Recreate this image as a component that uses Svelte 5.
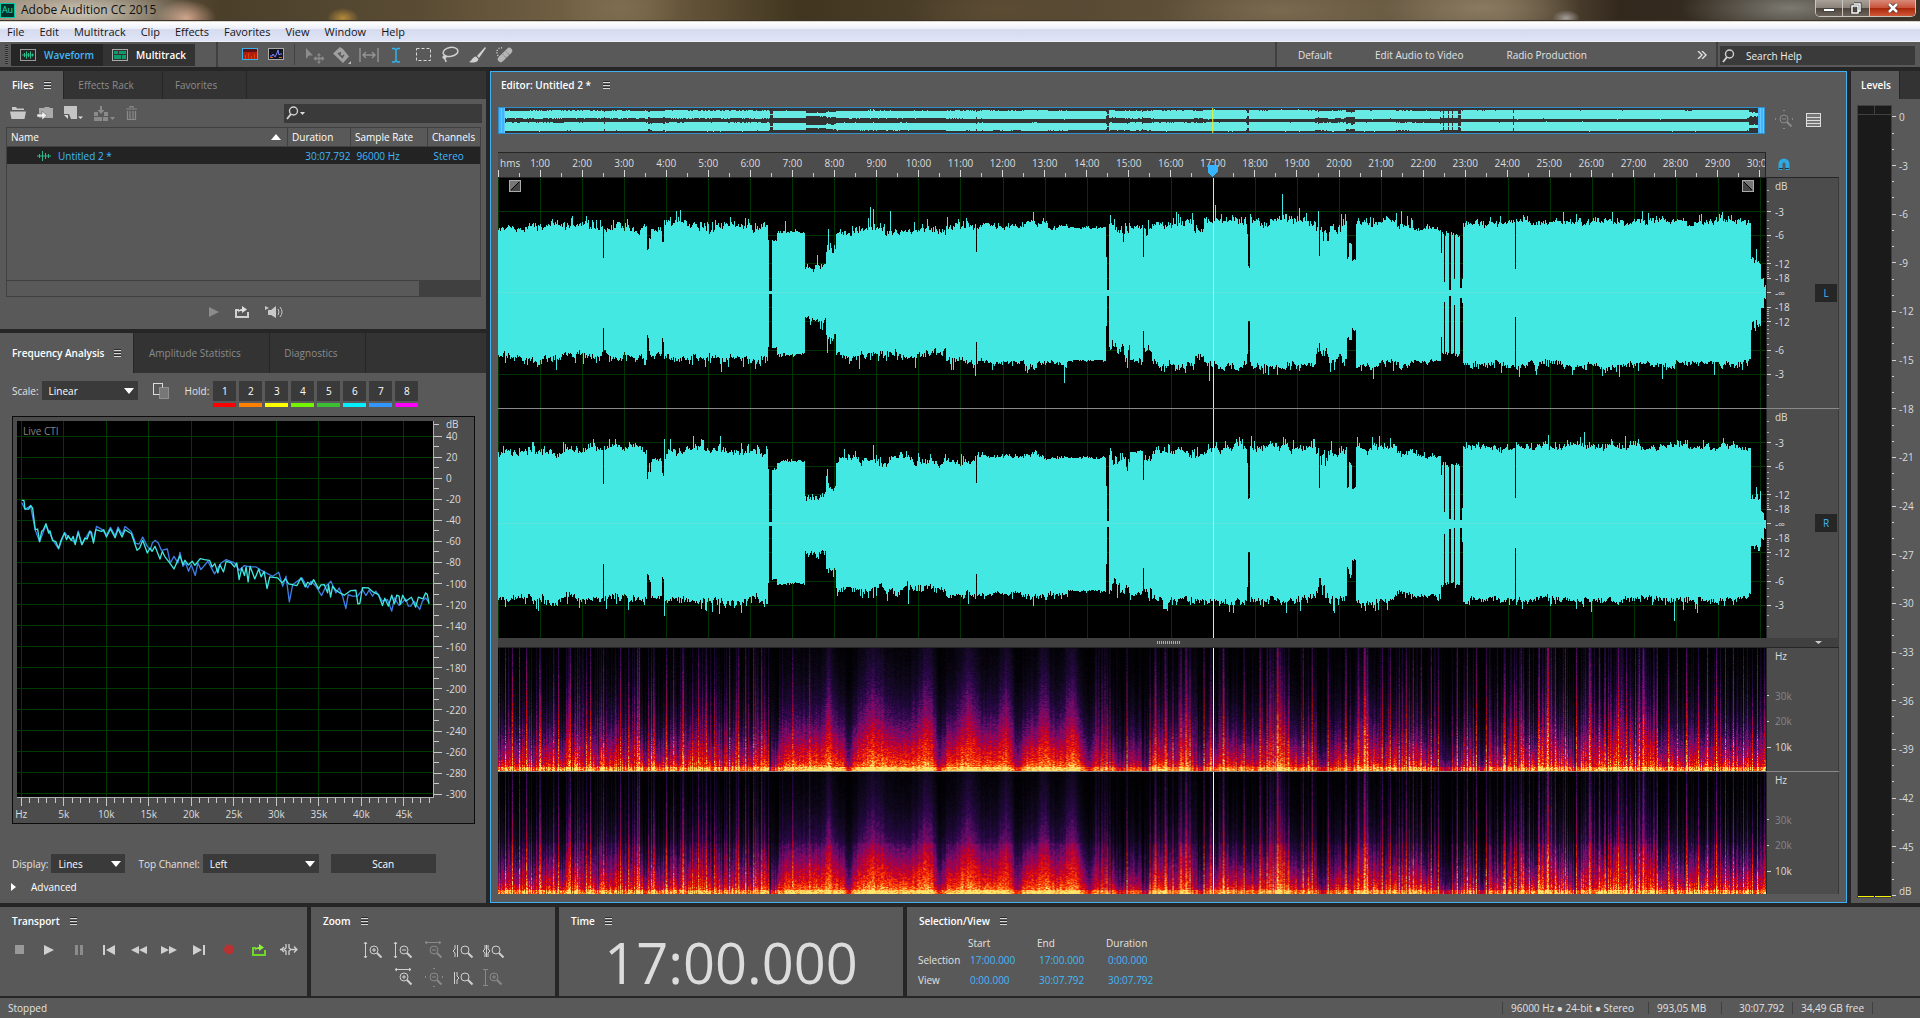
<script>
  import { onMount } from 'svelte';

  const menus = ['File', 'Edit', 'Multitrack', 'Clip', 'Effects', 'Favorites', 'View', 'Window', 'Help'];

  const holds = ['#ff0000', '#ff8000', '#ffff00', '#73f500', '#3dbf33', '#00f0ff', '#3396ff', '#ff00ff'];

  const minutes = Array.from({ length: 31 }, (_, i) => i);
  const total = 30 + 7.792 / 60;
  const playhead = (17 / total) * 100;
  const minuteX = (m) => (m / total) * 100;

  // dB scale of a waveform lane, 0 dB touches the lane edge
  const dbY = (db, dir) => 50 + dir * 50 * Math.pow(10, -db / 20);
  const dbLines = [3, 6, 12, 18];
  const dbMinor = [1, 2, 4, 5, 7, 8, 9, 10, 11, 13, 14, 15, 16, 17];

  const freqDb = Array.from({ length: 18 }, (_, i) => 40 - i * 20);
  const freqY = (db) => 4 + ((40 - db) / 340) * 95;
  const freqX = (k) => 1 + k * 2.045;
  const levels = Array.from({ length: 49 }, (_, i) => i);

  const WIDTH = 1267;

  // pseudo random numbers that stay the same on every load
  function makeRandom(seed) {
    let s = seed;
    return () => {
      s = (s * 1664525 + 1013904223) % 4294967296;
      return s / 4294967296;
    };
  }

  // start column, L up, L down, R up, R down, noise
  const segments = [
    [0, 65, 64, 72, 75, 4],
    [105, 35, 35, 40, 40, 0],
    [106, 64, 64, 73, 75, 4],
    [149, 43, 43, 48, 50, 2],
    [151, 53, 53, 56, 58, 3],
    [153, 62, 62, 66, 72, 2],
    [164, 48, 46, 52, 53, 3],
    [166, 65, 65, 72, 75, 4],
    [270, 52, 52, 54, 55, 2],
    [271, 2, 1, 2, 2, 0],
    [274, 52, 54, 54, 54, 1],
    [279, 60, 61, 61, 60, 1],
    [307, 26, 26, 26, 28, 4],
    [328, 44, 46, 42, 44, 6],
    [338, 62, 62, 63, 65, 4],
    [448, 66, 70, 66, 70, 4],
    [478, 41, 49, 41, 50, 0],
    [479, 66, 69, 66, 70, 2],
    [524, 69, 71, 67, 72, 3],
    [550, 65, 69, 65, 69, 2],
    [570, 64, 68, 65, 67, 1],
    [608, 36, 33, 38, 40, 0],
    [609, 3, 3, 3, 3, 0],
    [611, 56, 56, 68, 60, 8],
    [632, 65, 69, 72, 70, 2],
    [644, 36, 38, 44, 44, 0],
    [645, 58, 58, 60, 66, 5],
    [653, 68, 71, 72, 74, 4],
    [695, 58, 62, 68, 72, 3],
    [705, 70, 73, 75, 76, 4],
    [748, 56, 60, 60, 62, 2],
    [749, 25, 28, 25, 28, 1],
    [751, 70, 73, 76, 77, 4],
    [817, 60, 62, 66, 66, 5],
    [820, 37, 50, 36, 54, 0],
    [821, 56, 60, 60, 60, 8],
    [830, 65, 68, 72, 71, 5],
    [848, 34, 44, 34, 44, 2],
    [850, 50, 48, 58, 50, 2],
    [853, 34, 36, 36, 36, 2],
    [857, 70, 73, 76, 77, 4],
    [898, 66, 70, 72, 72, 3],
    [915, 62, 68, 68, 71, 2],
    [942, 40, 44, 50, 60, 2],
    [943, 58, 60, 60, 62, 2],
    [945, 11, 9, 12, 10, 0],
    [946, 57, 60, 60, 60, 2],
    [950, 3, 3, 5, 5, 0],
    [952, 57, 60, 60, 60, 2],
    [955, 14, 12, 4, 4, 0],
    [956, 57, 60, 58, 61, 2],
    [961, 5, 5, 4, 4, 0],
    [963, 14, 10, 16, 18, 0],
    [964, 69, 71, 75, 76, 3],
    [1016, 24, 24, 26, 24, 0],
    [1017, 70, 71, 76, 75, 3],
    [1252, 34, 33, 26, 26, 4],
    [1262, 15, 15, 12, 14, 1],
    [1265, 6, 6, 4, 4, 1]
  ];

  // single peaks standing out of the envelope, per side
  const peaks = [
    { 287: 71, 319: 38, 372: 85, 375: 83, 392: 81, 535: 80, 677: 80, 679: 78, 783: 98, 819: 81, 902: 81, 1064: 80, 1149: 79, 1257: 44 },
    { 361: 76, 417: 75, 477: 83, 566: 90, 710: 88, 1037: 82, 1120: 84, 1163: 86, 1215: 82 },
    { 166: 84, 375: 78, 784: 86, 858: 86, 891: 85, 1049: 88, 1085: 91, 1126: 87, 1257: 37 },
    { 166: 92, 130: 86, 410: 80, 470: 80, 876: 87, 1092: 88, 1175: 96, 1198: 89 }
  ];

  function envelope(side, seed) {
    const random = makeRandom(seed);
    const out = [];
    let k = 0;
    let drift = 0;
    for (let x = 0; x < WIDTH; x++) {
      while (k + 1 < segments.length && x >= segments[k + 1][0]) k++;
      const noise = segments[k][5];
      drift = drift * 0.8 + (random() - 0.5) * 0.9;
      let v = segments[k][side + 1] + (random() - 0.5 + drift) * noise * 1.4;
      if (random() > 0.82) v += random() * noise * 2.4;
      out.push(Math.round(Math.max(v, peaks[side][x] ?? 0, 1)));
    }
    return out;
  }

  function outline(up, down, mid, scale) {
    let d = `M0 ${mid}`;
    up.forEach((v, x) => (d += `V${mid - v * scale}H${x + 1}`));
    for (let x = down.length - 1; x >= 0; x--) d += `V${mid + down[x] * scale}H${x}`;
    return d + 'Z';
  }

  const sides = [envelope(0, 11), envelope(1, 23), envelope(2, 37), envelope(3, 51)];
  const lanes = [
    { name: 'L', path: outline(sides[0], sides[1], 114, 1) },
    { name: 'R', path: outline(sides[2], sides[3], 114, 1) }
  ];
  const overview = [outline(sides[0], sides[1], 7, 0.065), outline(sides[2], sides[3], 20, 0.062)];

  const lineTop =
    '65,512 72,512 75,538 86,538 92,527 98,535 106,600 113,598 119,636 125,605 130,601 138,582 146,610 150,603 158,633 167,635 176,656 184,630 194,610 200,630 205,618 214,632 220,620 226,645 235,608 246,645 255,625 262,628 270,605 275,608 281,640 288,600 305,605 312,600 320,622 332,598 346,624 355,598 367,622 376,600 395,612 412,662 420,655 429,632 443,670 451,655 457,665 466,650 481,688 488,665 495,680 510,700 523,718 541,678 550,705 556,692 566,706 578,695 586,707 602,687 615,690 630,692 638,712 646,702 655,730 661,705 672,727 680,695 695,700 705,712 712,700 719,750 727,715 735,738 740,712 746,757 752,710 766,748 778,718 785,742 794,725 803,777 811,742 835,745 848,760 858,748 868,763 893,768 905,745 918,772 925,758 935,765 943,750 958,778 965,766 975,765 985,790 988,765 994,803 1000,770 1010,782 1022,790 1035,797 1055,783 1070,782 1076,823 1082,822 1090,774 1108,775 1120,786 1138,795 1150,828 1157,806 1168,830 1178,797 1186,823 1193,797 1200,800 1203,825 1211,797 1220,815 1237,803 1250,833 1258,803 1272,808 1280,790 1285,795 1290,823';
  const lineBottom =
    '65,518 75,538 92,529 106,602 119,636 138,586 160,633 176,658 194,608 205,622 226,640 235,604 246,645 270,603 281,636 290,590 305,598 320,616 332,593 346,618 355,592 367,614 376,590 395,606 408,641 418,643 429,622 443,650 452,660 458,640 466,632 476,640 485,662 503,658 512,700 523,680 535,700 541,668 550,710 558,700 567,725 575,705 587,738 595,700 604,720 625,695 645,733 665,700 680,690 705,700 719,722 735,708 752,712 770,712 785,722 800,730 820,740 838,728 850,770 860,740 870,817 880,765 908,745 925,775 935,755 950,770 967,798 980,770 995,755 1010,790 1020,775 1030,800 1040,837 1047,795 1060,800 1075,800 1090,780 1100,798 1110,782 1120,800 1130,785 1150,815 1165,810 1178,845 1186,805 1200,828 1210,818 1220,808 1228,830 1235,830 1245,815 1262,840 1270,815 1280,805 1290,820';

  // columns where a transient reaches the high frequencies
  const hits = [
    7, 14, 21, 28, 41, 42, 55, 60, 72, 79, 92, 105, 122, 139, 141, 155, 168, 175, 184, 185, 200, 208, 216, 231, 240, 247, 255, 263, 294, 311,
    628, 656, 657, 666, 687, 705, 724, 725, 745, 761, 768, 778, 779, 804, 813, 829, 847, 865, 866, 883, 891, 900, 907, 914, 922, 932, 939, 958,
    968, 977, 987, 1005, 1006, 1015, 1022, 1030, 1040, 1048, 1049, 1056, 1066, 1077, 1090, 1100, 1106, 1119, 1127, 1136, 1144, 1158, 1169, 1178,
    1187, 1199, 1208, 1217, 1226, 1234, 1244, 1258
  ];
  const humps = [[330, 4], [375, 12], [428, 9], [470, 9], [508, 7], [545, 5], [573, 7], [1049, 6], [688, 8], [778, 8], [866, 9], [1090, 6], [1120, 7], [1144, 6]];
  const dips = [[273, 4], [350, 5], [441, 5], [518, 6], [590, 8], [622, 8], [646, 5], [700, 6], [824, 7], [949, 15], [982, 8], [1075, 3]];

  const heat = [
    [0, 0, 0, 0], [0.12, 14, 8, 26], [0.28, 42, 8, 74], [0.42, 112, 14, 112], [0.55, 168, 0, 74],
    [0.66, 218, 0, 12], [0.8, 255, 60, 0], [0.92, 255, 150, 40], [1, 255, 232, 110]
  ];

  function heatColor(v) {
    const t = Math.min(Math.max(v, 0), 0.999);
    let i = 1;
    while (heat[i][0] < t) i++;
    const a = heat[i - 1];
    const b = heat[i];
    const p = (t - a[0]) / (b[0] - a[0]);
    return [1, 2, 3].map((c) => a[c] + (b[c] - a[c]) * p);
  }

  function drawSpectrum(canvas, channel) {
    const ctx = canvas.getContext('2d');
    const { width, height } = canvas;
    const image = ctx.createImageData(width, height);
    const random = makeRandom(90);
    const grain = makeRandom(400 + channel);
    for (let x = 0; x < width; x++) {
      const smooth = x > 285 && x < 600;
      let reach = smooth ? 0.4 + random() * 0.1 : 0.24 + random() * 0.24;
      let gain = smooth ? 0.74 + random() * 0.13 : 0.5 + random() * 0.36;
      if (!smooth && random() > 0.82) {
        reach += 0.28;
        gain += 0.1;
      }
      if (hits.includes(x)) {
        reach = 0.72 + random() * 0.3;
        gain = 0.9;
      }
      if (x > 596 && x < 608 && x % 3 === 0) reach = 0.85;
      for (const [c, w] of humps) {
        const k = Math.exp(-Math.pow((x - c) / w, 2));
        reach += 0.24 * k;
        gain += 0.06 * k;
      }
      for (const [c, w] of dips) {
        const k = Math.exp(-Math.pow((x - c) / w, 2));
        if (!hits.includes(x)) {
          gain -= 0.28 * k;
          reach -= 0.1 * k;
        }
      }
      for (let y = 0; y < height; y++) {
        const f = 1 - y / height;
        let v = gain * Math.exp(-Math.pow(f / reach, 1.35));
        v += (grain() - 0.5) * (0.05 + v * 0.3);
        if (f < 0.1) v += 0.1 * (1 - f / 0.1);
        if (f < 0.04) v += 0.15;
        if (channel && f > 0.42) v *= 0.88;
        const [r, g, b] = heatColor(v);
        const i = (y * width + x) * 4;
        image.data[i] = r;
        image.data[i + 1] = g;
        image.data[i + 2] = b;
        image.data[i + 3] = 255;
      }
    }
    ctx.putImageData(image, 0, 0);
  }

  let spectra = [];

  onMount(() => {
    spectra.forEach((canvas, i) => drawSpectrum(canvas, i));
  });
</script>

{#snippet burger()}
  <svg class="burger" width="7" height="9" viewBox="0 0 7 9" aria-hidden="true">
    <path d="M0 1.5h7M0 4.5h7M0 7.5h7" stroke="#d8d8d8" />
    <path d="M0 .5h7M0 3.5h7M0 6.5h7" stroke="#2c2c2c" />
  </svg>
{/snippet}

{#snippet lens(sign, extra, dim, x)}
  <svg width="22" height="20" viewBox="0 0 22 20" fill="none" stroke={dim ? '#8a8a8a' : '#cfcfcf'} aria-hidden="true">
    <circle cx={x} cy="9" r="4" />
    <path d="M{x + 3} 12l4.500 4.500" stroke-width="2" />
    {#if sign !== 'none'}<path d="M{x - 2} 9h4" />{/if}
    {#if sign === 'plus'}<path d="M{x} 7v4" />{/if}
    <path d={extra} />
  </svg>
{/snippet}

{#snippet picker(id, label, value, width)}
  <label for={id}>{label}</label>
  <span class="picker {width}">
    <select {id}><option>{value}</option></select>
    <svg width="10" height="6" viewBox="0 0 10 6" aria-hidden="true"><path d="M0 0h10L5 6z" fill="#fff" /></svg>
  </span>
{/snippet}

{#snippet lensOnly()}
  <svg width="14" height="16" viewBox="0 0 14 16" fill="none" stroke="#d0d0d0" aria-hidden="true">
    <circle cx="7.500" cy="6" r="4" stroke-width="1.400" />
    <path d="M5 9L1 14" stroke-width="2" />
  </svg>
{/snippet}

<div class="app">
  <header class="titlebar">
    <span class="logo">Au</span>
    <h1>Adobe Audition CC 2015</h1>
    <div class="window-buttons">
      <button aria-label="Minimize"><svg width="12" height="10" viewBox="0 0 12 10"><rect x=".5" y="5.500" width="11" height="3" fill="#fff" stroke="#444" /></svg></button>
      <button aria-label="Restore">
        <svg width="12" height="12" viewBox="0 0 12 12" fill="none"><path d="M4 2h6v7h-2M2 4h6v7H2z" stroke="#333" stroke-width="3" /><path d="M4 2h6v7h-2M2 4h6v7H2z" stroke="#fff" stroke-width="1.500" /></svg>
      </button>
      <button class="close" aria-label="Close">
        <svg width="12" height="10" viewBox="0 0 12 10"><path d="M2 1l8 8M10 1l-8 8" stroke="#432" stroke-width="4" /><path d="M2 1l8 8M10 1l-8 8" stroke="#fff" stroke-width="2.500" /></svg>
      </button>
    </div>
  </header>

  <nav class="menubar">
    {#each menus as menu}<button>{menu}</button>{/each}
  </nav>

  <div class="toolbar">
    <span class="grip"></span>
    <button class="mode active">
      <svg width="16" height="12" viewBox="0 0 16 12" fill="none"><rect x=".5" y=".5" width="15" height="11" stroke="#9a9a9a" /><path d="M2 6h12M4.500 4v4M6.500 2.500v7M8.500 4v4M10.500 2.500v7M12.500 4.500v3" stroke="#2fb888" /></svg>
      Waveform
    </button>
    <button class="mode">
      <svg width="16" height="12" viewBox="0 0 16 12" fill="none"><rect x=".5" y=".5" width="15" height="11" fill="#333" stroke="#aaa" /><path d="M2 2h4v3H2zM7 2h7v3H7zM2 6h7v4H2zM10 6h4v4h-4z" fill="#0e9a6c" /></svg>
      Multitrack
    </button>
    <div class="views">
      <button aria-label="Spectral frequency display">
        <svg width="16" height="12" viewBox="0 0 16 12"><rect x=".5" y=".5" width="15" height="11" fill="#b02008" stroke="#35b4f0" /><path d="M1 1h14v3H1z" fill="#5c1018" /><path d="M3.500 11V7M6.500 11V5M9.500 11V8M12.500 11V6" stroke="#d84010" /></svg>
      </button>
      <button aria-label="Spectral pitch display">
        <svg width="16" height="12" viewBox="0 0 16 12" fill="none"><rect x=".5" y=".5" width="15" height="11" fill="#151520" stroke="#aaa" /><path d="M2 8h2l1-2 2 3 2-4 1-3 1 5 1-1h2" stroke="#7c86ff" /><path d="M2 9.500h3M11 9.500h3" stroke="#c66a20" /></svg>
      </button>
    </div>
    <div class="tools">
      <button aria-label="Move">
        <svg width="20" height="20" viewBox="0 0 20 20" fill="#8c8c8c"><path d="M1 3v11l3-3.500h4z" /><path d="M14 8l2 2.500h-1.500v2H17V11l2.500 2.500L17 16v-1.500h-2.500v2H16L14 19l-2-2.500h1.500v-2H11V16l-2.500-2.500L11 11v1.500h2.500v-2H12z" /></svg>
      </button>
      <button aria-label="Razor">
        <svg width="20" height="20" viewBox="0 0 20 20"><path d="M1 8.500L8 2l3 2 6 7.500L11 18z" fill="#a0a0a0" /><path d="M6 8l5 5M8.500 7l-1 3M12 10l-2 2" stroke="#595959" stroke-width="1.500" /><path d="M19 16v3h-3z" fill="#bbb" /></svg>
      </button>
      <button aria-label="Slip">
        <svg width="20" height="20" viewBox="0 0 20 20" fill="none" stroke="#949494" stroke-width="1.400"><path d="M1 3v14M19 3v14M4 10h12M7 7l-3 3 3 3M13 7l3 3-3 3" /></svg>
      </button>
      <button aria-label="Time selection">
        <svg width="20" height="20" viewBox="0 0 20 20" fill="none" stroke="#2fb4ee" stroke-width="1.500"><path d="M6 3.500h2.500L10 5l1.500-1.500H14M6 17h2.500l1.500-1.500 1.500 1.500H14M10 5v11" /></svg>
      </button>
      <button aria-label="Marquee selection">
        <svg width="20" height="20" viewBox="0 0 20 20" fill="none" stroke="#d8d8d8"><rect x="3.500" y="3.500" width="14" height="12" stroke-dasharray="3 2" /></svg>
      </button>
      <button aria-label="Lasso selection">
        <svg width="20" height="20" viewBox="0 0 20 20" fill="none" stroke="#d0d0d0" stroke-width="1.500"><ellipse cx="10.500" cy="7" rx="7.500" ry="4.500" transform="rotate(-10 10 7)" /><path d="M5 11c-3 0-2 3 0 2s1-3-1-1c0 2 2 2 2 5" /></svg>
      </button>
      <button aria-label="Paintbrush selection">
        <svg width="20" height="20" viewBox="0 0 20 20" fill="#d0d0d0"><path d="M18 2l1 1-7 10-2-2zM9 11.500l2.500 2.500c-1 4-5 4-9.500 3 3-1 3-5 7-5.500z" /></svg>
      </button>
      <button aria-label="Spot healing brush">
        <svg width="20" height="20" viewBox="0 0 20 20"><path d="M8 3a4 4 0 0 0-5 4 5 5 0 0 0 3 5" fill="none" stroke="#ccc" stroke-dasharray="1 1.500" stroke-width="1.500" /><rect x="2" y="7" width="18" height="6" rx="3" fill="#b5b5b5" transform="rotate(-45 11 10)" /><path d="M9 9.500l4 4M12 6.500l4 4" stroke="#666" stroke-dasharray="1 1" /></svg>
      </button>
    </div>
    <div class="workspaces">
      <button>Default</button>
      <button>Edit Audio to Video</button>
      <button>Radio Production</button>
      <button class="more" aria-label="More workspaces">
        <svg width="10" height="8" viewBox="0 0 10 8" fill="none" stroke="#e0e0e0" stroke-width="1.400"><path d="M1 0l4 4-4 4M5 0l4 4-4 4" /></svg>
      </button>
    </div>
    <div class="help">
      <label class="search">
        {@render lensOnly()}
        <input type="text" placeholder="Search Help" aria-label="Search Help" />
      </label>
    </div>
  </div>

  <main>
    <div class="side">
      <section class="panel files">
        <div class="tabs low">
          <button class="tab on">Files {@render burger()}</button>
          <button class="tab rack">Effects Rack</button>
          <button class="tab favs">Favorites</button>
        </div>
        <div class="file-tools">
          <button aria-label="Open file"><svg width="16" height="14" viewBox="0 0 16 14"><path d="M2 1h4l1 1.500h7V4H2zM0 5.500h16L14.500 13h-13z" fill="#c8c8c8" /></svg></button>
          <button aria-label="Import file"><svg width="16" height="14" viewBox="0 0 16 14"><path d="M2 2h5l1-1h4l1 1h3v10H2z" fill="#aaa" /><path d="M0 8h5V5l5 4.500L5 14v-3H0z" fill="#eee" stroke="#555" stroke-width=".5" /></svg></button>
          <button aria-label="New file"><svg width="19" height="14" viewBox="0 0 19 14"><path d="M0 0h13v13H7L5 8H0z" fill="#c4c4c4" /><path d="M0 9h4v4z" fill="#d8d8d8" /><path d="M14 10.500h5L16.500 13z" fill="#ddd" /></svg></button>
          <button aria-label="Insert into multitrack"><svg width="21" height="15" viewBox="0 0 21 15"><path d="M0 6h4v4H0zM10 6h4v4h-4zM0 11h8v4H0zM9 11h5v4H9zM6 0h2v4h2.500L7 8 3.500 4H6z" fill="#8a8a8a" /><path d="M16 11h5l-2.500 3z" fill="#8a8a8a" /></svg></button>
          <button aria-label="Delete"><svg width="11" height="14" viewBox="0 0 11 14" fill="none" stroke="#8a8a8a"><path d="M0 3h11M4 2V.5h3V2M1.500 5v8.500h8V5M4 5v8M7 5v8" stroke-width="1.200" /></svg></button>
          <label class="search narrow">
            {@render lensOnly()}
            <svg width="5" height="3" viewBox="0 0 5 3" aria-hidden="true"><path d="M0 0h5L2.500 3z" fill="#ddd" /></svg>
            <input type="text" aria-label="Search files" />
          </label>
        </div>
        <div class="file-list">
          <table>
            <thead>
              <tr>
                <th>
                  <span class="sorted">Name <svg width="10" height="6" viewBox="0 0 10 6" aria-hidden="true"><path d="M0 6h10L5 0z" fill="#fff" /></svg></span>
                </th>
                <th class="duration">Duration</th>
                <th class="rate">Sample Rate</th>
                <th class="channels">Channels</th>
              </tr>
            </thead>
            <tbody>
              <tr>
                <td>
                  <span class="file">
                    <svg width="14" height="12" viewBox="0 0 14 12" stroke="#2fb888" aria-hidden="true"><path d="M0 6h14M2.500 4v4M5.500 1v10M8.500 3v6M11.500 4v4" /></svg>
                    Untitled 2 *
                  </span>
                </td>
                <td class="num">30:07.792</td>
                <td>96000 Hz</td>
                <td class="stereo">Stereo</td>
              </tr>
            </tbody>
          </table>
          <div class="scroll"><span></span></div>
        </div>
        <div class="preview">
          <button aria-label="Play"><svg width="10" height="10" viewBox="0 0 10 10"><path d="M0 0l10 5-10 5z" fill="#8c8c8c" /></svg></button>
          <button aria-label="Loop"><svg width="14" height="12" viewBox="0 0 14 12"><path d="M4 4H1v7h12V6" fill="none" stroke="#d0d0d0" stroke-width="2" /><path d="M3 7c0-3 2-4 4-4V0l5 3.500L7 7V5C5 5 4 5 3 7z" fill="#e0e0e0" /></svg></button>
          <button aria-label="Auto-play"><svg width="18" height="14" viewBox="0 0 18 14"><path d="M0 1l4 2-4 2zM3 5h3l5-4v12L6 10H3z" fill="#c8c8c8" /><path d="M13 4q2 3 0 6M15 2q4 5 0 10" fill="none" stroke="#c8c8c8" /></svg></button>
        </div>
      </section>

      <section class="panel analysis">
        <div class="tabs">
          <button class="tab on">Frequency Analysis {@render burger()}</button>
          <button class="tab amp">Amplitude Statistics</button>
          <button class="tab diag">Diagnostics</button>
        </div>
        <div class="controls">
          {@render picker('scale', 'Scale:', 'Linear', 'w96')}
          <button class="copy" aria-label="Copy all graph data">
            <svg width="16" height="16" viewBox="0 0 16 16" fill="none"><rect x=".5" y=".5" width="9" height="11" stroke="#ddd" /><rect x="6.500" y="4.500" width="9" height="11" fill="#777" stroke="#bbb" stroke-dasharray="1 1" /></svg>
          </button>
          <span class="hold-label">Hold:</span>
          <div class="holds">
            {#each holds as color, i}
              <div class="hold">
                <button>{i + 1}</button>
                <span style="background: {color}"></span>
              </div>
            {/each}
          </div>
        </div>
        <div class="chart">
          <div class="plot-row">
            <div class="plot">
              <svg class="fill" width="100%" height="100%" shape-rendering="crispEdges">
                {#each freqDb as db}<line x1="0" x2="100%" y1="{freqY(db)}%" y2="{freqY(db)}%" stroke="#013a01" />{/each}
                {#each Array(10) as _, i}<line x1="{freqX(i * 5)}%" x2="{freqX(i * 5)}%" y1="0" y2="100%" stroke="#013a01" />{/each}
              </svg>
              <svg class="fill" width="100%" height="100%" viewBox="51 273 1251 1131" preserveAspectRatio="none" fill="none" stroke-width="4" stroke-linejoin="round">
                <polyline points={lineBottom} stroke="#3f7ee6" />
                <polyline points={lineTop} stroke="#40e6e0" />
              </svg>
              <span class="live">Live CTI</span>
            </div>
            <svg class="axis-y" width="40" height="100%" shape-rendering="crispEdges">
              <line x1="0" x2="5" y1="1%" y2="1%" stroke="#c8c8c8" />
              {#each freqDb as db}
                <line x1="0" x2="8" y1="{freqY(db)}%" y2="{freqY(db)}%" stroke="#c8c8c8" />
                {#if db > -300}<line x1="0" x2="5" y1="{freqY(db - 10)}%" y2="{freqY(db - 10)}%" stroke="#c8c8c8" />{/if}
                <text x="12" y="{freqY(db)}%" dy="4">{db}</text>
              {/each}
              <text x="12" y="7">dB</text>
            </svg>
          </div>
          <svg class="axis-x" width="100%" height="25" shape-rendering="crispEdges">
            {#each Array(49) as _, i}<line x1="{freqX(i)}%" x2="{freqX(i)}%" y1="0" y2={i % 5 ? 5 : 8} stroke="#c8c8c8" />{/each}
            {#each Array(10) as _, i}<text x="{freqX(i * 5)}%" y="20" text-anchor="middle">{i ? `${i * 5}k` : 'Hz'}</text>{/each}
          </svg>
        </div>
        <div class="controls display">
          {@render picker('display', 'Display:', 'Lines', 'w74')}
          <span class="spacer"></span>
          {@render picker('channel', 'Top Channel:', 'Left', 'w116')}
          <button class="scan">Scan</button>
        </div>
        <button class="advanced">
          <svg width="5" height="8" viewBox="0 0 5 8" aria-hidden="true"><path d="M0 0l5 4-5 4z" fill="#fff" /></svg>
          Advanced
        </button>
      </section>
    </div>

    <section class="panel editor">
      <h2>Editor: Untitled 2 * {@render burger()}</h2>
      <div class="overview-row">
        <div class="overview">
          <svg class="fill" width="100%" height="100%" viewBox="0 0 1267 27" preserveAspectRatio="none" fill="#68eae4" shape-rendering="crispEdges">
            {#each overview as d}<path {d} />{/each}
          </svg>
          <svg class="fill" width="100%" height="100%"><line x1="{playhead}%" x2="{playhead}%" y1="0" y2="100%" stroke="#f4f020" /></svg>
          <span class="handle"></span>
          <span class="handle end"></span>
        </div>
        <div class="overview-tools">
          <button aria-label="Zoom out full">{@render lens('minus', 'M9 1l1-1 1 1M9 18l1 1 1-1M2 8l-1 1 1 1M18 8l1 1-1 1', true, 10)}</button>
          <button aria-label="Show list"><svg width="15" height="14" viewBox="0 0 15 14" fill="none" stroke="#ddd"><rect x=".5" y=".5" width="14" height="13" fill="#777" /><path d="M0 4.500h15M0 7.500h15M0 10.500h15" /></svg></button>
        </div>
      </div>

      <div class="ruler-row">
        <div class="ruler">
          <svg width="100%" height="100%" shape-rendering="crispEdges">
            <text x="2" y="14">hms</text>
            {#each minutes as m}
              <line x1="{minuteX(m)}%" x2="{minuteX(m)}%" y1="17" y2="24" stroke="#d8d8d8" />
              {#if m < 30}<line x1="{minuteX(m + 0.5)}%" x2="{minuteX(m + 0.5)}%" y1="20" y2="24" stroke="#c8c8c8" />{/if}
              {#if m > 0}<text x="{minuteX(m)}%" y="14" text-anchor="middle">{m}:00</text>{/if}
            {/each}
            <svg x="{playhead}%" overflow="visible"><path d="M-5 12h10v7l-5 5-5-5z" fill="#35b4ff" /></svg>
          </svg>
        </div>
        <button class="magnet" aria-label="Toggle snapping">
          <svg width="12" height="13" viewBox="0 0 12 13" fill="none"><path d="M2.500 12V6a3.500 3.500 0 0 1 7 0v6" stroke="#2ea8e0" stroke-width="4" /><path d="M1 10.500h4M7 10.500h4" stroke="#173a4d" /></svg>
        </button>
      </div>

      {#each lanes as lane, i}
        <div class="lane wave">
          <div class="view">
            <svg class="fill" width="100%" height="100%" shape-rendering="crispEdges" stroke="#013401">
              {#each minutes as m}<line x1="{minuteX(m)}%" x2="{minuteX(m)}%" y1="0" y2="100%" />{/each}
              {#each dbLines as db}
                <line x1="0" x2="100%" y1="{dbY(db, -1)}%" y2="{dbY(db, -1)}%" />
                <line x1="0" x2="100%" y1="{dbY(db, 1)}%" y2="{dbY(db, 1)}%" />
              {/each}
            </svg>
            <svg class="fill" width="100%" height="100%" viewBox="0 0 1267 228" preserveAspectRatio="none" shape-rendering="crispEdges">
              <path d={lane.path} fill="#43e8e2" />
            </svg>
            <svg class="fill" width="100%" height="100%" shape-rendering="crispEdges">
              <line x1="0" x2="100%" y1="50%" y2="50%" stroke="#5ce4dc" />
              <line x1="{playhead}%" x2="{playhead}%" y1="0" y2="100%" stroke="#ffff00" />
            </svg>
            {#if i === 0}
              <svg class="fade" width="12" height="12" viewBox="0 0 12 12" aria-hidden="true"><rect x=".5" y=".5" width="11" height="11" fill="#444" stroke="#aaa" /><path d="M1 1h10L1 11z" fill="#777" /><path d="M2 10l8-8" stroke="#000" /></svg>
              <svg class="fade out" width="12" height="12" viewBox="0 0 12 12" aria-hidden="true"><rect x=".5" y=".5" width="11" height="11" fill="#444" stroke="#aaa" /><path d="M1 1h10v10z" fill="#777" /><path d="M2 2l8 8" stroke="#000" /></svg>
            {/if}
          </div>
          <div class="scale">
            <svg width="48" height="100%" shape-rendering="crispEdges">
              {#each [-1, 1] as dir}
                {#each dbLines as db}
                  <line x1="0" x2="4" y1="{dbY(db, dir)}%" y2="{dbY(db, dir)}%" stroke="#d0d0d0" />
                  <text x="8" y="{dbY(db, dir)}%" dy="4">-{db}</text>
                {/each}
                {#each dbMinor as db}<line x1="0" x2="2" y1="{dbY(db, dir)}%" y2="{dbY(db, dir)}%" stroke="#b0b0b0" />{/each}
              {/each}
              <line x1="0" x2="4" y1="50%" y2="50%" stroke="#d0d0d0" />
              <text x="8" y="50%" dy="4">-∞</text>
              <text x="8" y="12">dB</text>
            </svg>
            <button class="channel">{lane.name}</button>
          </div>
        </div>
      {/each}

      <div class="splitter">
        <span class="dots"></span>
        <svg width="7" height="3" viewBox="0 0 7 3" aria-hidden="true"><path d="M0 0h7L3.500 3z" fill="#ccc" /></svg>
      </div>

      {#each [0, 1] as i}
        <div class="lane spectral">
          <div class="view">
            <canvas class="fill" width="1267" height="123" bind:this={spectra[i]}></canvas>
            <svg class="fill" width="100%" height="100%" shape-rendering="crispEdges"><line x1="{playhead}%" x2="{playhead}%" y1="0" y2="100%" stroke="#fffaa8" /></svg>
          </div>
          <div class="scale">
            <svg width="48" height="100%" shape-rendering="crispEdges">
              <text x="8" y="12">Hz</text>
              {#each [30, 20, 10] as k, n}
                <line x1="0" x2={k === 10 ? 4 : 2} y1="{39 + n * 21}%" y2="{39 + n * 21}%" stroke="#d0d0d0" />
                <text x="8" y="{39 + n * 21}%" dy="4" class:faint={k > 10}>{k}k</text>
              {/each}
            </svg>
          </div>
        </div>
      {/each}
    </section>

    <section class="panel levels">
      <div class="tabs low"><button class="tab on">Levels</button></div>
      <div class="meter-row">
        <div class="meter">
          <div class="clip"><span></span><span></span></div>
          <div class="bars"><span></span><span></span></div>
        </div>
        <svg class="meter-scale" width="28" height="100%" shape-rendering="crispEdges">
          {#each levels as n}
            <line x1="0" x2={n % 3 ? 2 : 4} y1="{1.5 + n * 2.045}%" y2="{1.5 + n * 2.045}%" stroke="#d0d0d0" />
            {#if n % 3 === 0 && n < 48}<text x="7" y="{1.5 + n * 2.045}%" dy="4">{n ? -n : 0}</text>{/if}
          {/each}
          <text x="7" y="99.6%">dB</text>
        </svg>
      </div>
    </section>
  </main>

  <div class="dock">
    <section class="panel transport">
      <h2>Transport {@render burger()}</h2>
      <div class="buttons">
        <button aria-label="Stop"><svg width="9" height="9" viewBox="0 0 9 9"><path d="M0 0h9v9H0z" fill="#999" /></svg></button>
        <button aria-label="Play"><svg width="10" height="10" viewBox="0 0 10 10"><path d="M0 0l10 5-10 5z" fill="#d0d0d0" /></svg></button>
        <button aria-label="Pause"><svg width="8" height="10" viewBox="0 0 8 10"><path d="M0 0h3v10H0zM5 0h3v10H5z" fill="#8c8c8c" /></svg></button>
        <button aria-label="Go to start"><svg width="12" height="10" viewBox="0 0 12 10"><path d="M0 0h2v10H0zM12 0v10L3 5z" fill="#d0d0d0" /></svg></button>
        <button aria-label="Rewind"><svg width="16" height="8" viewBox="0 0 16 8"><path d="M8 0v8L0 4zM16 0v8L8 4z" fill="#d0d0d0" /></svg></button>
        <button aria-label="Fast forward"><svg width="16" height="8" viewBox="0 0 16 8"><path d="M0 0v8l8-4zM8 0v8l8-4z" fill="#d0d0d0" /></svg></button>
        <button aria-label="Go to end"><svg width="12" height="10" viewBox="0 0 12 10"><path d="M10 0h2v10h-2zM0 0v10l9-5z" fill="#d0d0d0" /></svg></button>
        <button aria-label="Record"><svg width="10" height="11" viewBox="0 0 10 11"><circle cx="5" cy="5.500" r="5" fill="#b83232" /></svg></button>
        <button aria-label="Loop playback"><svg width="14" height="12" viewBox="0 0 14 12"><path d="M4 4H1v7h12V6" fill="none" stroke="#6fd62a" stroke-width="2" /><path d="M3 7c0-3 2-4 4-4V0l5 3.500L7 7V5C5 5 4 5 3 7z" fill="#8cf03c" /></svg></button>
        <button aria-label="Skip selection"><svg width="18" height="11" viewBox="0 0 18 11" fill="none" stroke="#d0d0d0" stroke-width="1.300"><path d="M0 5.500h3M4 3L1.500 5.500 4 8M6 0v4L4 5.500 6 7v4M9 0v4l2 1.500L9 7v4M11 5.500h5M14 2.500l3 3-3 3" /></svg></button>
      </div>
    </section>
    <section class="panel zoom">
      <h2>Zoom {@render burger()}</h2>
      <div class="buttons">
        <button aria-label="Zoom in amplitude">{@render lens('plus', 'M3.500 1v16M2 3l1.500-2L5 3M2 15l1.500 2L5 15', false, 12)}</button>
        <button aria-label="Zoom out amplitude">{@render lens('minus', 'M3.500 1v16M2 3l1.500-2L5 3M2 15l1.500 2L5 15', false, 12)}</button>
        <button aria-label="Zoom out time">{@render lens('minus', 'M3 1.500h16M5 0L3 1.500 5 3M17 0l2 1.500L17 3', true, 12)}</button>
        <button aria-label="Zoom in at in point">{@render lens('none', 'M5.500 4v12M3 4v4l-2 2 2 2v4', false, 13)}</button>
        <button aria-label="Zoom to selection">{@render lens('none', 'M3 4v4l-2 2 2 2v4M6 4v4l2 2-2 2v4M4.500 4v12', false, 14)}</button>
        <button class="second" aria-label="Zoom in time">{@render lens('plus', 'M3 1.500h16M5 0L3 1.500 5 3M17 0l2 1.500L17 3', false, 12)}</button>
        <button aria-label="Zoom out full">{@render lens('minus', 'M11 1l1-1 1 1M11 18l1 1 1-1M4 8L3 9l1 1M20 8l1 1-1 1', true, 12)}</button>
        <button aria-label="Zoom in at out point">{@render lens('none', 'M2.500 4v12M5 4v4l2 2-2 2v4', false, 13)}</button>
        <button aria-label="Zoom reset amplitude">{@render lens('plus', 'M3.500 1v16M1 1.500h5M1 17.500h5', true, 12)}</button>
      </div>
    </section>
    <section class="panel time">
      <h2>Time {@render burger()}</h2>
      <output>17:00.000</output>
    </section>
    <section class="panel selection">
      <h2>Selection/View {@render burger()}</h2>
      <table>
        <thead>
          <tr><td></td><th>Start</th><th>End</th><th>Duration</th></tr>
        </thead>
        <tbody>
          <tr><th>Selection</th><td>17:00.000</td><td>17:00.000</td><td>0:00.000</td></tr>
          <tr><th>View</th><td>0:00.000</td><td>30:07.792</td><td>30:07.792</td></tr>
        </tbody>
      </table>
    </section>
  </div>

  <footer>
    <span class="state">Stopped</span>
    <span class="cell format">96000 Hz ● 24-bit ● Stereo</span>
    <span class="cell size">993,05 MB</span>
    <span class="cell length">30:07.792</span>
    <span class="cell free">34,49 GB free</span>
  </footer>
</div>

<style>
  :global(body) {
    background: #262626;
  }

  .app {
    display: flex;
    flex-direction: column;
    height: 100vh;
    min-height: 800px;
    overflow: hidden;
    background: #262626;
    color: #e2e2e2;
    font-family: 'Open Sans', 'Noto Sans', sans-serif;
    font-size: 10px;
    font-weight: 500;
    line-height: 14px;
  }

  button,
  input,
  select {
    margin: 0;
    padding: 0;
    border: 0;
    border-radius: 0;
    background: none;
    color: inherit;
    font: inherit;
    white-space: nowrap;
  }

  button {
    display: flex;
    align-items: center;
    justify-content: center;
  }

  h1,
  h2 {
    margin: 0;
    font-size: 10px;
    font-weight: 600;
  }

  svg {
    display: block;
    flex-shrink: 0;
  }

  text {
    fill: #dcdcdc;
  }

  table {
    border-collapse: collapse;
  }

  th {
    font-weight: 500;
    text-align: left;
  }

  .fill {
    position: absolute;
    inset: 0;
    width: 100%;
    height: 100%;
  }

  /* window frame */
  .titlebar {
    display: flex;
    align-items: center;
    height: 20px;
    border-bottom: 1px solid #d8d4cc;
    box-shadow: inset 0 -1px #3c352b;
    padding-bottom: 1px;
    background:
      radial-gradient(ellipse 120px 30px at 80px 12px, rgba(222, 214, 200, 0.85), rgba(222, 214, 200, 0) 100%),
      radial-gradient(ellipse 30px 18px at 186px 18px, #d0a088, transparent),
      radial-gradient(ellipse 16px 10px at 343px 18px, #b48a3c, transparent),
      radial-gradient(ellipse 60px 30px at 620px 8px, #7d6c50, transparent),
      radial-gradient(ellipse 90px 30px at 1000px 10px, #5c4c34, transparent),
      radial-gradient(ellipse 120px 30px at 1280px 10px, #7a6a50, transparent),
      radial-gradient(ellipse 100px 30px at 1480px 8px, #8a7a62, transparent),
      radial-gradient(ellipse 14px 8px at 1566px 18px, #a8a0a0, transparent),
      radial-gradient(ellipse 110px 30px at 1790px 8px, #7c7a72, transparent),
      linear-gradient(90deg, #8d7f6a, #4b3f2a 220px, #5a4c34 420px, #786648 620px, #41351f 800px, #5a4b35 1100px, #6f6048 1500px, #32281c 1620px, #3b332a);
  }

  .logo {
    display: flex;
    align-items: center;
    justify-content: center;
    width: 13px;
    height: 13px;
    border: 1px solid #0cc4a0;
    background: #02302a;
    color: #1fe0b8;
    font-size: 9px;
  }

  .titlebar h1 {
    margin-left: 6px;
    color: #111;
    font-size: 12px;
    font-weight: 400;
  }

  .window-buttons {
    display: flex;
    align-self: flex-start;
    margin-left: auto;
    margin-right: 4px;
    border: 1px solid #c9c4bc;
    border-top: 0;
    border-radius: 0 0 5px 5px;
    overflow: hidden;
  }

  .window-buttons button {
    width: 27px;
    height: 16px;
    border-right: 1px solid #c9c4bc;
    background: linear-gradient(#a8a29a, #8a8278 50%, #4c443a 50%, #6c645c);
  }

  .window-buttons .close {
    width: 45px;
    border-right: 0;
    background: linear-gradient(#d88a78, #c8503a 50%, #a82408 50%, #d05838);
  }

  .menubar {
    display: flex;
    gap: 15px;
    height: 20px;
    padding-left: 7px;
    border-bottom: 1px solid #eef0f8;
    box-sizing: border-box;
    background: linear-gradient(#fff, #eceff8 35%, #d6dcef 40%, #dfe5f6);
    color: #151515;
    font-size: 11px;
  }

  .toolbar {
    display: flex;
    align-items: stretch;
    height: 25px;
    background: #595959;
  }

  .grip {
    width: 3px;
    margin: 3px 3px 3px 5px;
    background: repeating-linear-gradient(#2c2c2c 0 1px, #666 1px 2px);
  }

  .mode {
    gap: 8px;
    width: 92px;
    margin: 2px 0 1px;
    background: #333;
    color: #fff;
    font-weight: 600;
  }

  .mode.active {
    background: #262626;
    color: #40b8f8;
  }

  .views {
    display: flex;
    gap: 10px;
    margin-left: 21px;
    padding: 0 10px 2px 24px;
    border-left: 2px solid #404040;
  }

  .tools {
    display: flex;
    gap: 7px;
    margin: 2px 0;
    padding-left: 10px;
    border-left: 1px solid #404040;
  }

  .workspaces {
    display: flex;
    gap: 43px;
    width: 441px;
    margin-left: auto;
    padding-left: 21px;
    border-left: 2px solid #404040;
    box-sizing: border-box;
  }

  .workspaces .more {
    margin-left: auto;
    margin-right: 9px;
  }

  .help {
    width: 204px;
    padding: 4px 5px 2px 2px;
    border-left: 2px solid #404040;
    box-sizing: border-box;
  }

  .search {
    display: flex;
    align-items: center;
    height: 19px;
    padding-left: 2px;
    background: #3a3a3a;
  }

  .search input {
    flex: 1;
    min-width: 0;
    margin-left: 10px;
    outline: 0;
  }

  .search input::placeholder {
    color: #f0f0f0;
  }

  /* panels */
  main {
    display: flex;
    flex: 1;
    gap: 4px;
    min-height: 0;
    padding: 4px 0;
  }

  .panel {
    background: #595959;
  }

  .side {
    display: flex;
    flex-direction: column;
    gap: 4px;
    width: 486px;
  }

  .tabs {
    display: flex;
    height: 40px;
    background: #333;
    color: #8c8c8c;
  }

  .tabs.low {
    height: 28px;
  }

  .tab {
    padding: 0 12px;
    border-right: 1px solid #262626;
  }

  .tab.on {
    gap: 10px;
    background: #595959;
    color: #fff;
    font-weight: 600;
  }

  .tab.rack {
    width: 99px;
    padding: 0 25px 0 12px;
  }

  .tab.favs {
    width: 84px;
    padding-right: 28px;
  }

  .tab.amp {
    width: 136px;
    padding-right: 26px;
  }

  .tab.diag {
    width: 96px;
    padding-right: 26px;
  }

  .files {
    display: flex;
    flex-direction: column;
    height: 258px;
  }

  .file-tools {
    display: flex;
    align-items: center;
    gap: 11px;
    height: 20px;
    padding: 4px 4px 4px 10px;
  }

  .search.narrow {
    width: 196px;
    margin-left: auto;
  }

  .file-list {
    display: flex;
    flex: 1;
    flex-direction: column;
    margin: 0 5px 0 6px;
    border: 1px solid #404040;
  }

  .file-list table {
    width: 100%;
    table-layout: fixed;
  }

  .file-list th {
    height: 18px;
    padding: 0 4px;
    border-left: 1px solid #404040;
    border-bottom: 1px solid #404040;
    color: #fff;
  }

  .file-list th:first-child {
    border-left: 0;
  }

  .file-list td {
    height: 17px;
    padding: 0 1px 0 6px;
    background: #232323;
    color: #40b8f8;
  }

  .file-list .num {
    padding: 0;
    text-align: right;
  }

  .duration {
    width: 54px;
  }

  .rate {
    width: 68px;
  }

  .channels {
    width: 44px;
  }

  .sorted {
    display: flex;
    align-items: center;
    justify-content: space-between;
    padding-right: 2px;
  }

  .file {
    display: flex;
    align-items: center;
    gap: 7px;
    padding-left: 24px;
  }

  .scroll {
    height: 15px;
    margin-top: auto;
    border-top: 1px solid #404040;
    background: #404040;
  }

  .scroll span {
    display: block;
    width: 87%;
    height: 15px;
    background: #595959;
  }

  .preview {
    display: flex;
    justify-content: center;
    gap: 16px;
    height: 29px;
    padding: 0 0 3px 5px;
  }

  .analysis {
    display: flex;
    flex: 1;
    flex-direction: column;
    min-height: 0;
  }

  .controls {
    display: flex;
    align-items: flex-start;
    padding: 8px 12px 0;
    line-height: 20px;
  }

  .controls label {
    margin-right: 3px;
  }

  .picker {
    display: grid;
    align-items: center;
    height: 19px;
    background: #3a3a3a;
    color: #fff;
  }

  .picker select,
  .picker svg {
    grid-area: 1 / 1;
  }

  .picker select {
    width: 100%;
    height: 19px;
    padding-left: 7px;
    appearance: none;
  }

  .picker svg {
    justify-self: end;
    margin-right: 4px;
    pointer-events: none;
  }

  .w96 {
    width: 96px;
  }

  .w74 {
    width: 74px;
  }

  .w116 {
    width: 116px;
  }

  .copy {
    margin: 2px 16px 0 15px;
  }

  .hold-label {
    margin-right: 4px;
  }

  .holds {
    display: flex;
    gap: 3px;
  }

  .hold button {
    width: 23px;
    height: 20px;
    background: #3a3a3a;
    color: #fff;
  }

  .hold span {
    display: block;
    height: 4px;
    margin-top: 2px;
  }

  .chart {
    display: flex;
    flex: 1;
    flex-direction: column;
    min-height: 0;
    margin: 9px 11px 0 12px;
    padding: 4px 0 0 4px;
    border: 1px solid #0c0c0c;
    background: #4c4c4c;
  }

  .plot-row {
    display: flex;
    flex: 1;
    min-height: 0;
  }

  .plot {
    position: relative;
    flex: 1;
    border-right: 1px solid #b0b0b0;
    border-bottom: 1px solid #b0b0b0;
    background: #000;
  }

  .live {
    position: absolute;
    left: 6px;
    top: 3px;
    color: #848484;
  }

  .axis-y {
    overflow: visible;
  }

  .axis-x {
    width: calc(100% - 41px);
    overflow: visible;
  }

  .display {
    padding-top: 30px;
  }

  .spacer {
    width: 13px;
  }

  .scan {
    width: 105px;
    height: 19px;
    margin-left: 12px;
    background: #3a3a3a;
    color: #fff;
  }

  .advanced {
    align-self: flex-start;
    gap: 15px;
    margin: 6px 0 9px 11px;
    color: #fff;
  }

  /* editor */
  .editor {
    display: flex;
    flex: 1;
    flex-direction: column;
    min-width: 0;
    padding: 0 7px 8px;
    border: 1px solid #40b0f0;
    box-sizing: border-box;
  }

  h2 {
    display: flex;
    align-items: center;
    gap: 12px;
    color: #fff;
  }

  .editor h2 {
    height: 26px;
    padding-left: 3px;
  }

  .overview-row,
  .ruler-row {
    display: flex;
  }

  .overview {
    position: relative;
    flex: 1;
    height: 25px;
    margin: 9px 0 18px;
    border: 1px solid #3190cc;
    background: #333;
  }

  .handle {
    position: absolute;
    left: 0;
    top: 0;
    width: 6px;
    height: 25px;
    background: repeating-linear-gradient(90deg, #3fb4ff 0 2px, #66c8ff 2px 3px);
  }

  .handle.end {
    left: auto;
    right: 0;
  }

  .overview-tools {
    display: flex;
    gap: 10px;
    width: 74px;
    height: 44px;
    padding-left: 9px;
    box-sizing: border-box;
  }

  .ruler {
    flex: 1;
    height: 25px;
    border: 1px solid #262626;
    border-width: 1px 1px 0 0;
    box-sizing: border-box;
    background: #4c4c4c;
  }

  .magnet {
    width: 73px;
    padding: 0 37px 0 0;
    box-sizing: border-box;
  }

  .lane {
    display: flex;
    flex: 229 1 0;
    min-height: 0;
    border-top: 1px solid #262626;
  }

  .lane.wave + .wave {
    border-top-color: #8a8a8a;
  }

  .lane.spectral {
    flex-grow: 122;
  }

  .lane.spectral + .spectral {
    border-top-color: #8a8a8a;
  }

  .view {
    position: relative;
    flex: 1;
    background: #000;
  }

  .fade {
    position: absolute;
    left: 11px;
    top: 2px;
  }

  .fade.out {
    left: auto;
    right: 12px;
  }

  .scale {
    display: flex;
    align-items: center;
    width: 73px;
    border-left: 1px solid #262626;
    border-right: 1px solid #3a3a3a;
    box-sizing: border-box;
    background: #4c4c4c;
  }

  .faint {
    fill: #868686;
  }

  .channel {
    width: 22px;
    height: 18px;
    background: #262626;
    color: #40b8f8;
  }

  .splitter {
    display: flex;
    align-items: center;
    height: 9px;
    padding-left: 659px;
    padding-right: 17px;
    background: #404040;
  }

  .dots {
    width: 24px;
    height: 3px;
    margin-right: auto;
    background: repeating-linear-gradient(90deg, #aaa 0 1px, #404040 1px 2px);
  }

  /* levels */
  .levels {
    display: flex;
    flex-direction: column;
    width: 69px;
  }

  .levels .tab {
    width: 49px;
    padding: 0 0 0 2px;
  }

  .meter-row {
    display: flex;
    flex: 1;
    padding: 6px 0 5px 6px;
    min-height: 0;
  }

  .meter {
    display: flex;
    flex-direction: column;
    width: 35px;
    border: 1px solid #404040;
    box-sizing: border-box;
    background: #1a1a1a;
  }

  .clip,
  .bars {
    display: flex;
  }

  .clip {
    height: 8px;
    border-bottom: 1px solid #404040;
  }

  .clip span {
    flex: 1;
  }

  .clip span:first-child {
    border-right: 1px solid #404040;
  }

  .bars {
    flex: 1;
    gap: 1px;
  }

  .bars span {
    flex: 1;
    border-bottom: 1px solid #f4f000;
  }

  /* bottom row */
  .dock {
    display: flex;
    gap: 4px;
    height: 89px;
  }

  .dock .panel {
    box-sizing: border-box;
    padding-top: 7px;
  }

  .dock h2 {
    gap: 10px;
    padding-left: 12px;
  }

  .transport {
    width: 307px;
  }

  .zoom {
    width: 244px;
  }

  .time {
    width: 344px;
  }

  .selection {
    flex: 1;
  }

  .transport .buttons {
    display: flex;
    height: 43px;
    padding-left: 4px;
  }

  .transport .buttons button {
    width: 30px;
  }

  .zoom .buttons {
    display: grid;
    grid-template-columns: repeat(5, 30px);
    grid-auto-rows: 27px;
    padding: 9px 0 0 47px;
  }

  .second {
    grid-column: 2;
  }

  .time output {
    display: block;
    color: #dcdcdc;
    font-size: 56px;
    font-weight: 400;
    line-height: 68px;
    text-align: center;
  }

  .selection table {
    margin: 7px 0 0 11px;
  }

  .selection th,
  .selection td {
    width: 69px;
    height: 20px;
    padding: 0;
  }

  .selection tr > :first-child {
    width: 50px;
  }

  .selection thead th,
  .selection thead td {
    height: 15px;
  }

  .selection tbody td {
    padding-left: 2px;
    box-sizing: border-box;
    color: #40b8f8;
  }

  footer {
    display: flex;
    align-items: center;
    height: 20px;
    margin-top: 2px;
    background: #595959;
  }

  .state {
    flex: 1;
    padding-left: 8px;
  }

  .cell {
    height: 12px;
    line-height: 12px;
    padding-left: 8px;
    border-left: 1px solid #404040;
    box-sizing: border-box;
  }

  .format {
    width: 146px;
  }

  .size {
    width: 73px;
  }

  .length {
    width: 71px;
    padding-left: 17px;
  }

  .free {
    width: 81px;
    margin-right: 47px;
    border-right: 1px solid #404040;
  }
</style>
